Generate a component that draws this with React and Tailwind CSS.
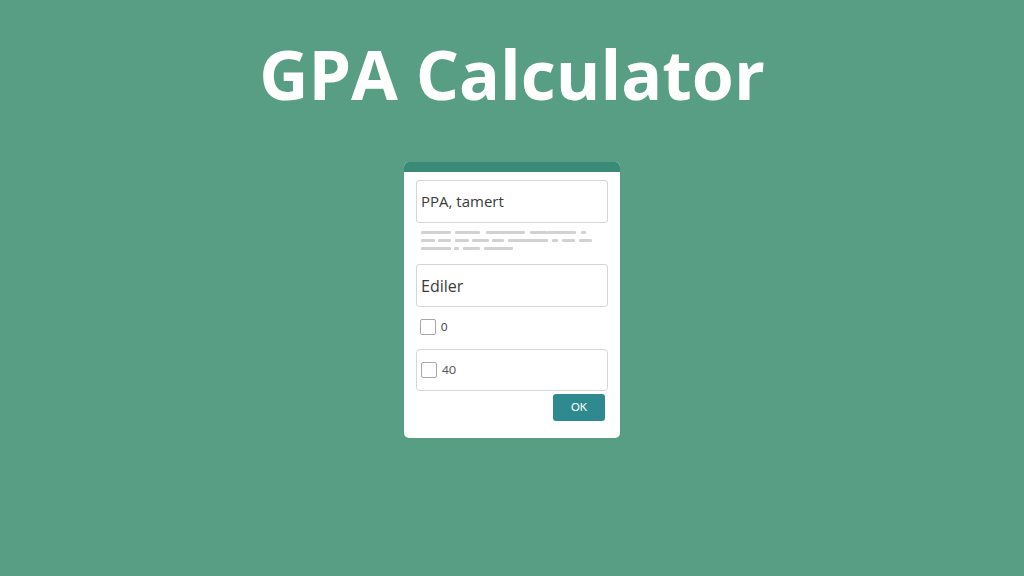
import React from "react";

// gray placeholder strokes under the first field: [width, gap-before]
const lines = [
  [[30, 0], [25, 4], [39, 6], [17, 5], [29, 0], [5, 5]],
  [[14, 0], [13, 3], [14, 4], [17, 3], [12, 3], [40, 4], [6, 4], [13, 4], [13, 4]],
  [[30, 0], [5, 3], [17, 4], [29, 4]],
];

export default function App() {
  return (
    <div
      className="w-[1024px] h-[576px] bg-[#579e85] flex flex-col items-center overflow-hidden"
      style={{ fontFamily: "Lato, 'Open Sans', sans-serif" }}
    >
      <h1
        className="mt-[31px] text-white font-bold text-[68px] leading-[86px] tracking-[0px]"
        style={{ fontFamily: "'Open Sans', sans-serif" }}
      >
        GPA Calculator
      </h1>
      <div className="mt-[45px] w-[216px] h-[276px] bg-white rounded-[5px] overflow-hidden flex flex-col">
        <div className="h-[10px] bg-[#3a8a77]" />
        <div className="flex flex-col px-[12px] pt-[8px]">
          <div className="h-[43px] border border-[#d6d6d6] rounded-[3px] flex items-center px-[4px] text-[15px] text-[#3a3a3a]" style={{ fontFamily: "'Open Sans', sans-serif" }}>
            PPA, tamert
          </div>
          <div className="mt-[8px] pl-[5px] flex flex-col gap-[5px]">
            {lines.map((ln, i) => (
              <div key={i} className="flex h-[3px]">
                {ln.map(([w, g], j) => (
                  <div key={j} className="h-[3px] bg-[#d2d2d2] rounded-[1px]" style={{ width: w, marginLeft: g }} />
                ))}
              </div>
            ))}
          </div>
          <div className="mt-[14px] h-[43px] border border-[#d6d6d6] rounded-[3px] flex items-center px-[4px] text-[16px] text-[#3a3a3a]" style={{ fontFamily: "'Open Sans', sans-serif" }}>
            Ediler
          </div>
          <div className="mt-[12px] h-[16px] flex items-center pl-[4px] gap-[5px]">
            <div className="w-[16px] h-[16px] border border-[#a8a8a8] rounded-[2px]" />
            <span className="text-[11px] text-[#444]">0</span>
          </div>
          <div className="mt-[14px] h-[42px] border border-[#d6d6d6] rounded-[4px] flex items-center pl-[4px] gap-[5px]">
            <div className="w-[16px] h-[16px] border border-[#a8a8a8] rounded-[2px]" />
            <span className="text-[12px] text-[#555]">40</span>
          </div>
          <div className="flex justify-end mt-[3px]">
            <button className="w-[52px] h-[27px] bg-[#2f8a8f] rounded-[3px] text-white text-[11px] mr-[3px]">
              OK
            </button>
          </div>
        </div>
      </div>
    </div>
  );
}
